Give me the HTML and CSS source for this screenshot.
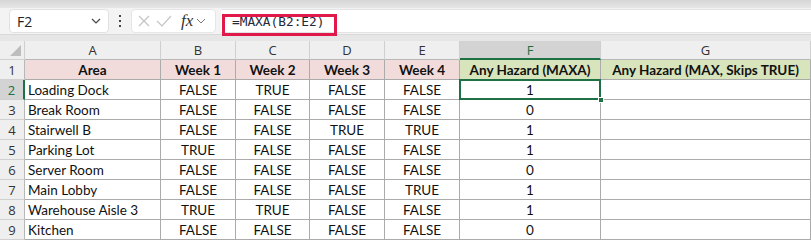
FILE: index.html
```html
<!DOCTYPE html>
<html lang="en">

<head>
	<meta charset="UTF-8">
	<title>MAXA</title>
	<link rel="stylesheet" href="styles.css">
</head>

<body>
	<div class="top-strip"></div>

	<div class="formula-bar">
		<div class="name-box">
			<span>F2</span>
			<svg class="chevron" width="10" height="6" viewBox="0 0 10 6"><path d="M1 1 L5 5 L9 1" fill="none" stroke="#444" stroke-width="1.2"/></svg>
		</div>
		<div class="dots"><i></i><i></i><i></i></div>
		<div class="fx-box">
			<svg width="12" height="12" viewBox="0 0 12 12"><path d="M1 1 L11 11 M11 1 L1 11" stroke="#c4c4c4" stroke-width="1.2"/></svg>
			<svg width="16" height="13" viewBox="0 0 16 13"><path d="M1 6 L6 11 L15 1" fill="none" stroke="#c4c4c4" stroke-width="1.2"/></svg>
			<span class="fx">fx</span>
			<svg width="10" height="6" viewBox="0 0 10 6"><path d="M1 1 L5 5 L9 1" fill="none" stroke="#777" stroke-width="1"/></svg>
		</div>
		<div class="formula-input">
			<span class="formula">=MAXA(B2:E2)</span>
			<div class="highlight"></div>
		</div>
	</div>

	<div class="gap"></div>

	<div class="sheet">
		<div class="corner"></div>
		<div class="col-head">A</div>
		<div class="col-head">B</div>
		<div class="col-head">C</div>
		<div class="col-head">D</div>
		<div class="col-head">E</div>
		<div class="col-head active">F</div>
		<div class="col-head">G</div>

		<div class="row-head">1</div>
		<div class="cell title pink">Area</div>
		<div class="cell title pink">Week 1</div>
		<div class="cell title pink">Week 2</div>
		<div class="cell title pink">Week 3</div>
		<div class="cell title pink">Week 4</div>
		<div class="cell title green">Any Hazard (MAXA)</div>
		<div class="cell title green">Any Hazard (MAX, Skips TRUE)</div>

		<div class="row-head active">2</div>
		<div class="cell left">Loading Dock</div>
		<div class="cell">FALSE</div>
		<div class="cell">TRUE</div>
		<div class="cell">FALSE</div>
		<div class="cell">FALSE</div>
		<div class="cell selected">1<div class="handle"></div></div>
		<div class="cell"></div>

		<div class="row-head">3</div>
		<div class="cell left">Break Room</div>
		<div class="cell">FALSE</div>
		<div class="cell">FALSE</div>
		<div class="cell">FALSE</div>
		<div class="cell">FALSE</div>
		<div class="cell">0</div>
		<div class="cell"></div>

		<div class="row-head">4</div>
		<div class="cell left">Stairwell B</div>
		<div class="cell">FALSE</div>
		<div class="cell">FALSE</div>
		<div class="cell">TRUE</div>
		<div class="cell">TRUE</div>
		<div class="cell">1</div>
		<div class="cell"></div>

		<div class="row-head">5</div>
		<div class="cell left">Parking Lot</div>
		<div class="cell">TRUE</div>
		<div class="cell">FALSE</div>
		<div class="cell">FALSE</div>
		<div class="cell">FALSE</div>
		<div class="cell">1</div>
		<div class="cell"></div>

		<div class="row-head">6</div>
		<div class="cell left">Server Room</div>
		<div class="cell">FALSE</div>
		<div class="cell">FALSE</div>
		<div class="cell">FALSE</div>
		<div class="cell">FALSE</div>
		<div class="cell">0</div>
		<div class="cell"></div>

		<div class="row-head">7</div>
		<div class="cell left">Main Lobby</div>
		<div class="cell">FALSE</div>
		<div class="cell">FALSE</div>
		<div class="cell">FALSE</div>
		<div class="cell">TRUE</div>
		<div class="cell">1</div>
		<div class="cell"></div>

		<div class="row-head">8</div>
		<div class="cell left">Warehouse Aisle 3</div>
		<div class="cell">TRUE</div>
		<div class="cell">TRUE</div>
		<div class="cell">FALSE</div>
		<div class="cell">FALSE</div>
		<div class="cell">1</div>
		<div class="cell"></div>

		<div class="row-head">9</div>
		<div class="cell left">Kitchen</div>
		<div class="cell">FALSE</div>
		<div class="cell">FALSE</div>
		<div class="cell">FALSE</div>
		<div class="cell">FALSE</div>
		<div class="cell">0</div>
		<div class="cell"></div>
	</div>
</body>

</html>
```

FILE: styles.css
```css
*,
*:before,
*:after {
	box-sizing: border-box;
}

body {
	margin: 0;
	padding: 0;
	width: 811px;
	height: 242px;
	overflow: hidden;
	font-family: Lato, "Open Sans", sans-serif;
	font-size: 13.5px;
	color: #111;
	background-color: #fff;
}

.top-strip {
	height: 8px;
	background: linear-gradient(#d6d6d6, #e6e6e6);
}

.formula-bar {
	height: 26px;
	display: flex;
	align-items: stretch;
	background-color: #f3f3f3;
	padding: 1px 0 1px 9px;
}

.name-box {
	width: 100px;
	display: flex;
	align-items: center;
	justify-content: space-between;
	padding: 0 7px 0 7px;
	background-color: #fff;
	border: 1px solid #e1e1e1;
	border-radius: 4px;
	font-family: "Segoe UI", "Open Sans", sans-serif;
	font-size: 14px;
	color: #222;
}

.dots {
	width: 22px;
	display: flex;
	flex-direction: column;
	align-items: center;
	justify-content: center;
	gap: 3px;
}

.dots i {
	width: 2px;
	height: 2px;
	background-color: #444;
}

.fx-box {
	width: 85px;
	display: flex;
	align-items: center;
	gap: 6px;
	padding-left: 6px;
	background-color: #fff;
	border: 1px solid #e6e6e6;
	border-radius: 4px;
}

.fx-box .fx {
	font-family: "Liberation Serif", serif;
	font-style: italic;
	font-size: 17px;
	color: #333;
	margin-left: 3px;
	margin-right: -3px;
}

.formula-input {
	flex: 1;
	margin-left: 5px;
	position: relative;
	display: flex;
	align-items: center;
	padding-left: 11px;
	background-color: #fff;
	border-top: 1px solid #e3e3e3;
	border-bottom: 1px solid #e3e3e3;
}

.formula {
	font-family: "DejaVu Sans Mono", monospace;
	font-size: 12.8px;
	color: #1f2a3c;
	padding-top: 1px;
}

.highlight {
	position: absolute;
	left: 1px;
	top: 4px;
	width: 115px;
	height: 22px;
	border: 3px solid #e0194a;
}

.gap {
	height: 7px;
	background-color: #e6e6e6;
	border-top: 1px solid #d9d9d9;
}

.sheet {
	display: grid;
	grid-template-columns: 25px 136px 75px 74px 75px 75px 141px 210px;
	grid-auto-rows: 20px;
	grid-template-rows: 19px;
}

.corner {
	background-color: #efefef;
	border-right: 1px solid #d0d0d0;
	border-bottom: 1px solid #d0d0d0;
	position: relative;
}

.corner:after {
	content: "";
	position: absolute;
	right: 3px;
	bottom: 3px;
	border-left: 11px solid transparent;
	border-bottom: 11px solid #bdbdbd;
}

.col-head {
	display: flex;
	align-items: center;
	justify-content: center;
	background-color: #efefef;
	border-right: 1px solid #d0d0d0;
	border-bottom: 1px solid #b8b8b8;
	font-family: "Segoe UI", "Open Sans", sans-serif;
	font-size: 13px;
	color: #333;
}

.col-head.active {
	background-color: #d3d3d3;
	color: #1e6e42;
	border-bottom: 2px solid #1e7145;
}

.row-head {
	display: flex;
	align-items: center;
	justify-content: center;
	background-color: #efefef;
	border-right: 1px solid #b8b8b8;
	border-bottom: 1px solid #d0d0d0;
	font-family: "Segoe UI", "Open Sans", sans-serif;
	font-size: 13px;
	color: #333;
}

.row-head.active {
	background-color: #d3d3d3;
	color: #1e6e42;
	border-right: 2px solid #1e7145;
}

.cell {
	display: flex;
	align-items: center;
	justify-content: center;
	border-right: 1px solid #ababab;
	border-bottom: 1px solid #ababab;
	padding: 0 3px;
	white-space: nowrap;
	overflow: visible;
}

.cell.left {
	justify-content: flex-start;
}

.cell.title {
	font-weight: bold;
}

.cell.pink {
	background-color: #f2dcdb;
}

.cell.green {
	background-color: #d8e4bc;
}

.cell.selected {
	position: relative;
}

.cell.selected:before {
	content: "";
	position: absolute;
	left: -1px;
	top: -1px;
	right: -1px;
	bottom: -1px;
	border: 2px solid #1e7145;
}

.handle {
	position: absolute;
	right: -4px;
	bottom: -4px;
	width: 6px;
	height: 6px;
	background-color: #1e7145;
	border: 1px solid #fff;
	z-index: 1;
}
```
